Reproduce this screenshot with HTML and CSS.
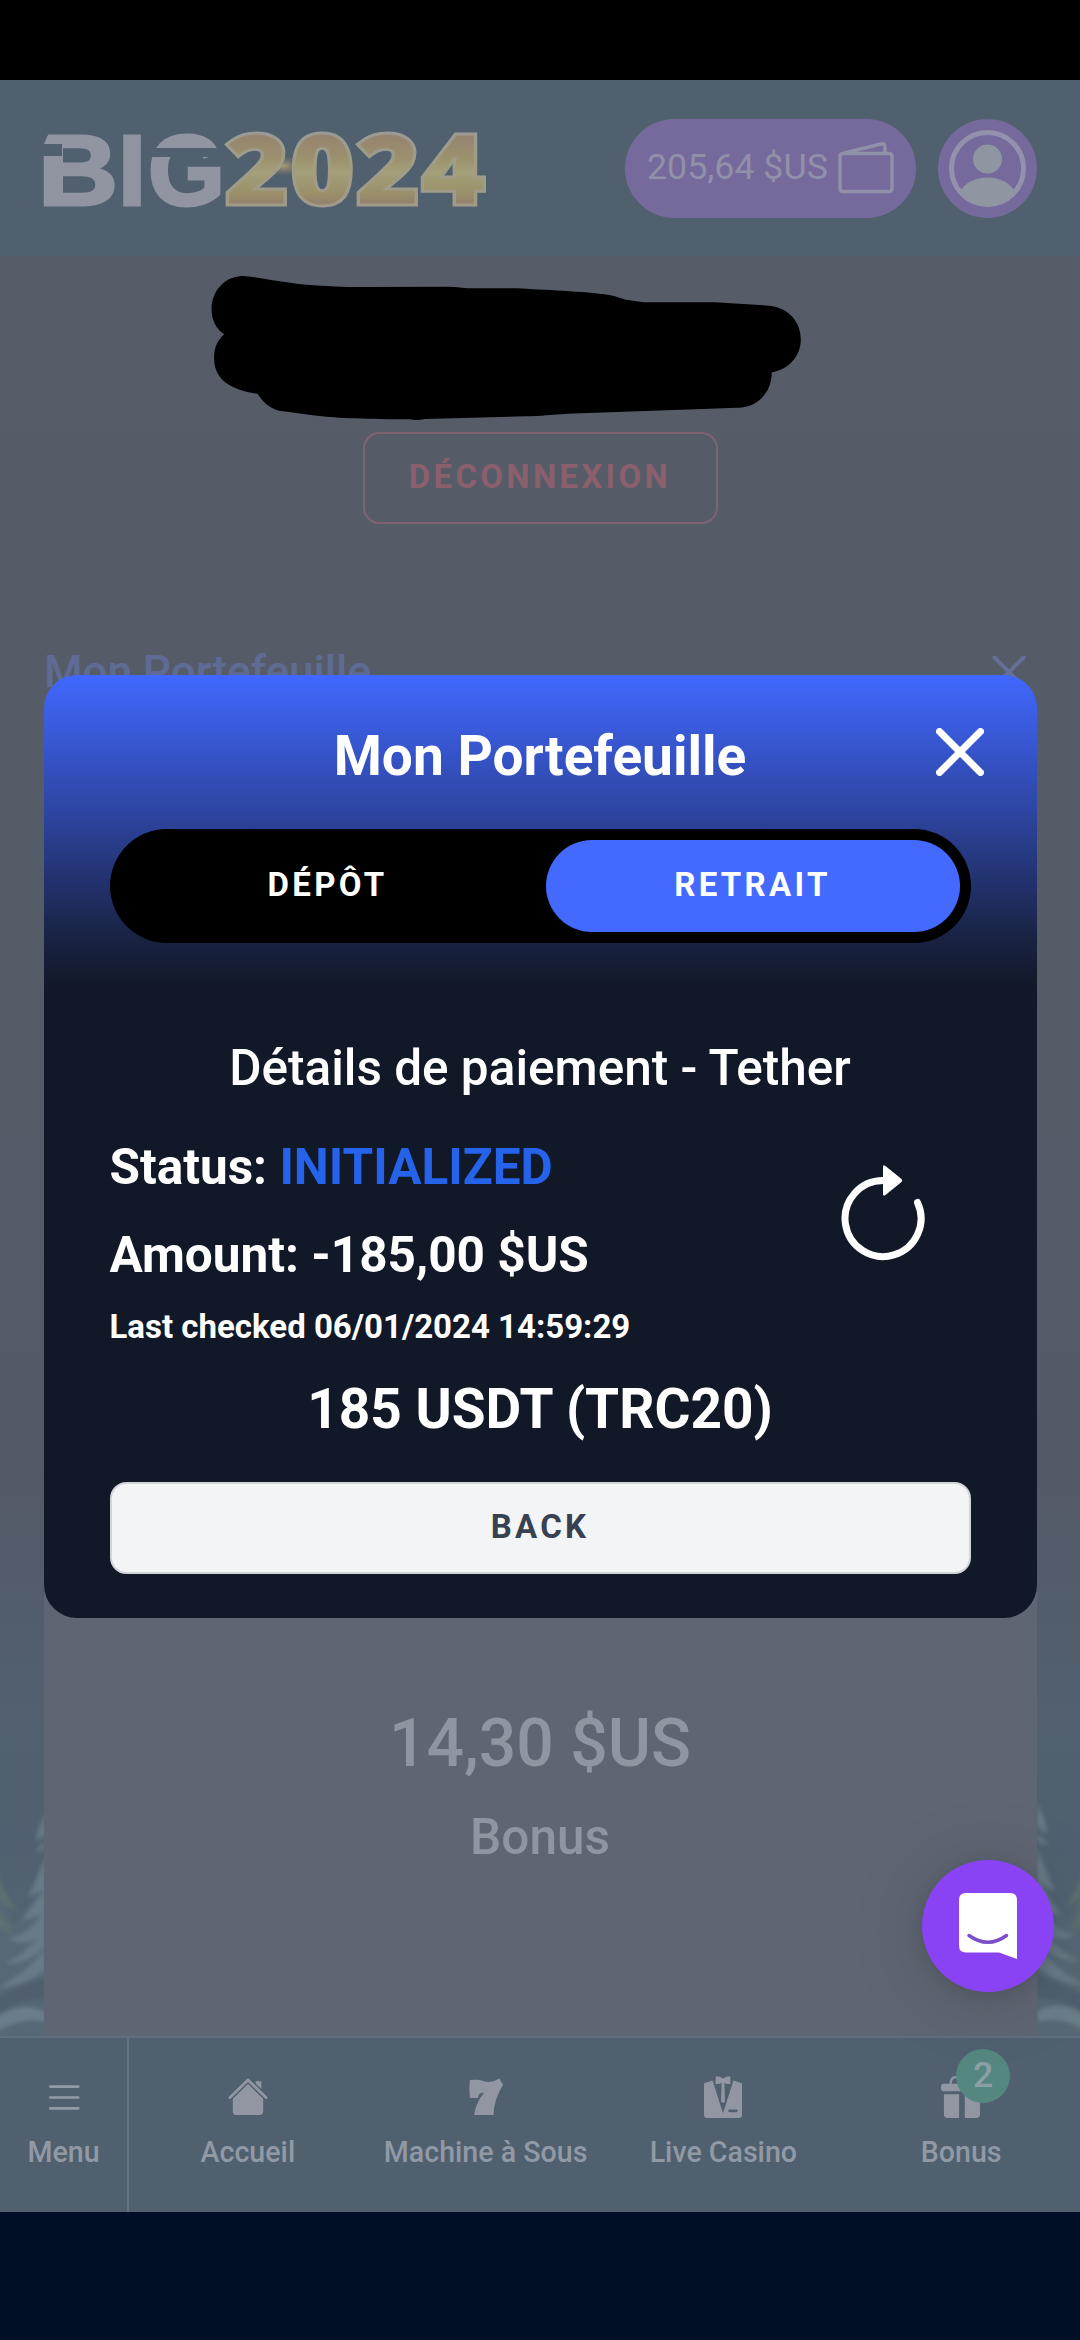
FILE: index.html
```html
<!DOCTYPE html>
<html lang="fr">
<head>
<meta charset="utf-8">
<title>BIG2024 - Mon Portefeuille</title>
<link rel="stylesheet" href="styles.css">
</head>
<body>
<div class="status-bar"></div>
<div class="app">
  <svg class="scenery" viewBox="0 0 1080 400" aria-hidden="true">
    <defs>
      <filter id="soft" x="-20%" y="-20%" width="140%" height="140%"><feGaussianBlur stdDeviation="2"/></filter>
      <g id="tree" filter="url(#soft)">
        <path d="M-6 240 L14 290 L46 250 V400 H-6Z" fill="#566774"/>
        <path d="M46 176 L38 194 L36 206 L46 198ZM46 205 L34 216 L44 214ZM46 220 L28 262 L46 252ZM46 250 L22 284 L46 278ZM46 272 Q30 300 8 302 Q28 314 46 294ZM46 290 Q30 316 4 328 Q28 328 46 310ZM46 312 Q26 338 -4 352 Q24 350 46 334Z" fill="#687a86"/>
        <path d="M-6 230 Q6 262 18 276 Q4 270 -6 256ZM-6 266 Q4 284 14 298 Q2 296 -6 286Z" fill="#5e706f"/>
        <path d="M-6 364 Q20 348 46 342 V362 Q20 364 -6 380Z" fill="#4f5f6e"/>
        <path d="M-4 382 Q20 364 46 376 V386 Q20 380 -4 396Z" fill="#6b7e89"/>
      </g>
    </defs>
    <use href="#tree"/>
    <use href="#tree" transform="translate(1083 -16) scale(-1 1.04)"/>
  </svg>

  <header class="topbar">
    <svg class="logo" viewBox="0 0 444 88" role="img" aria-label="BIG2024">
      <defs>
        <linearGradient id="gold" x1="0" y1="0" x2="0" y2="1">
          <stop offset="0" stop-color="#918686"/><stop offset=".3" stop-color="#97856f"/>
          <stop offset=".45" stop-color="#9c916d"/><stop offset=".55" stop-color="#a3a07a"/>
          <stop offset=".7" stop-color="#9a9069"/><stop offset=".8" stop-color="#927e6d"/>
          <stop offset="1" stop-color="#8d7773"/>
        </linearGradient>
        <linearGradient id="rim" x1="0" y1="0" x2="0" y2="1">
          <stop offset="0" stop-color="#9398a3"/><stop offset=".5" stop-color="#a09d86"/><stop offset="1" stop-color="#a0988e"/>
        </linearGradient>
        <radialGradient id="flare"><stop offset="0" stop-color="#a99a72"/><stop offset="1" stop-color="#8c7a70" stop-opacity="0"/></radialGradient>
      </defs>
      <text class="logo-big" y="80.500"><tspan x="-6" textLength="80" lengthAdjust="spacingAndGlyphs">B</tspan><tspan x="74">I</tspan><tspan x="104" textLength="77" lengthAdjust="spacingAndGlyphs">G</tspan></text>
      <path class="logo-cut" d="M-4 20H18V32H-4ZM-4 4H7L0 20H-4ZM104 24H180V33H104Z"/>
      <ellipse cx="240" cy="42" rx="18" ry="10" fill="url(#flare)"/>
      <text class="logo-year" x="180" y="80.500" textLength="262" lengthAdjust="spacingAndGlyphs">2024</text>
    </svg>
    <div class="account">
      <div class="balance">
        <span>205,64 $US</span>
        <svg class="wallet" viewBox="0 0 56 52"><path d="M6 11 L43 2 Q47 1 47 5 V11 M4 11.500 H51 Q54 11.500 54 14.500 V46 Q54 49.500 51 49.500 H5 Q2 49.500 2 46 V14.500 Q2 11.500 5 11.500Z" fill="none" stroke="#9090a9" stroke-width="3.500" stroke-linejoin="round"/></svg>
      </div>
      <svg class="avatar" viewBox="0 0 99 99">
        <circle cx="49.500" cy="49.500" r="49.500" fill="#756a9b"/>
        <circle cx="49.500" cy="49.500" r="36" fill="none" stroke="#9391ad" stroke-width="5"/>
        <circle cx="49.500" cy="40" r="14.500" fill="#8f96a1"/>
        <path d="M22.500 72 Q30 59 49.500 58.500 Q69 59 76.500 72 Q67 87 49.500 87.500 Q32 87 22.500 72Z" fill="#8f96a1"/>
      </svg>
    </div>
  </header>

  <main class="page">
    <svg class="redaction" viewBox="0 0 1080 176" aria-hidden="true">
      <path transform="translate(180 -6) scale(.4209 .3333)" d="M150 78 C180 80 240 96 300 104 C350 108 380 111 440 111 L640 110 C660 111 670 114 690 115 L800 115 C860 120 960 124 1020 135 C1045 140 1050 148 1065 150 L1100 157 L1270 157 L1400 167 C1445 172 1475 215 1475 268 C1475 320 1445 360 1406 367 C1406 430 1370 474 1325 473 L920 491 C880 494 860 498 820 499 L580 507 C570 511 555 511 545 508 C450 508 370 504 330 498 C300 494 270 486 235 482 C212 474 196 455 185 432 C150 424 81 410 81 325 C81 290 91 268 105 253 C86 238 75 210 75 177 C75 120 110 77 150 78Z"/>
    </svg>
    <button class="logout">DÉCONNEXION</button>
    <div class="page-title">
      <h2>Mon Portefeuille</h2>
      <svg class="page-close" viewBox="0 0 34 34"><path d="M2.500 2.500 L31.500 31.500 M31.500 2.500 L2.500 31.500"/></svg>
    </div>
    <section class="wallet-card">
      <div class="bonus-amount">14,30 $US</div>
      <div class="bonus-label">Bonus</div>
    </section>
  </main>

  <nav class="tabs">
    <a class="tab tab-menu">
      <svg viewBox="0 0 48 48"><path d="M9.500 12H39M9.500 23.500H39M9.500 35H39" fill="none" stroke="#919aa5" stroke-width="2.800" stroke-linecap="round"/></svg>
      <span>Menu</span>
    </a>
    <a class="tab">
      <svg viewBox="0 0 48 48"><path d="M24 8.500 L40 24.500 V38 Q40 42 36 42 H12 Q8 42 8 38 V24.500Z"/><path d="M32 14V6.500H38V20Z"/><path d="M5 23.500 L24 5 L43 23.500" fill="none" stroke="#50606f" stroke-width="6"/><path d="M5 23.500 L24 5 L43 23.500" fill="none" stroke="#9196a2" stroke-width="3" stroke-linecap="round" stroke-linejoin="round"/></svg>
      <span>Accueil</span>
    </a>
    <a class="tab">
      <svg viewBox="0 0 48 48"><path d="M7 5 Q17 4 21 6 Q30 9 38 3.500 L42 10 Q32 26 32 42 H11.500 Q13 29 22 18.500 Q16 18 15.500 24 H7 Q6 14 7 5Z"/></svg>
      <span>Machine à Sous</span>
    </a>
    <a class="tab">
      <svg viewBox="0 0 48 48"><path d="M13 5.500 L24 40 L35 5.500 L44 8.500 V42 Q44 45 41 45 H7 Q4 45 4 42 V8.500Z"/><path d="M16.500 1 Q21 1 24 3.500 Q27 1 31.500 1 L32 9 Q28 10 25.500 8 L26 28 Q24 30 22 28 L22.500 8 Q20 10 16 9Z"/><path d="M31 37.500H38" fill="none" stroke="#50606f" stroke-width="3" stroke-linecap="round"/></svg>
      <span>Live Casino</span>
    </a>
    <a class="tab">
      <span class="gift">
        <svg viewBox="0 0 48 48"><rect x="3" y="9" width="42" height="8" rx="3"/><path d="M6 20H22V45H10Q6 45 6 41ZM28 20H44V41Q44 45 40 45H28Z"/><path d="M13 10 Q13 2 18.500 2 Q23 2 24.500 9 Q27 2 31 2 Q36 2 36 10" fill="none" stroke="#9196a2" stroke-width="2.500"/></svg>
        <b class="badge">2</b>
      </span>
      <span>Bonus</span>
    </a>
  </nav>

  <div class="overlay">
    <section class="modal" role="dialog">
      <div class="modal-head">
        <h1>Mon Portefeuille</h1>
        <svg class="modal-close" viewBox="0 0 48 48"><path d="M3.500 3.500 L44.500 44.500 M44.500 3.500 L3.500 44.500"/></svg>
      </div>
      <div class="switch">
        <button>DÉPÔT</button>
        <button class="active">RETRAIT</button>
      </div>
      <h3>Détails de paiement - Tether</h3>
      <div class="info">
        <div>
          <p>Status: <span class="state">INITIALIZED</span></p>
          <p>Amount: -185,00 $US</p>
          <p class="checked">Last checked 06/01/2024 14:59:29</p>
        </div>
        <svg class="refresh" viewBox="0 0 88 100"><path d="M78.500 40.500 A38 38 0 1 1 44 18.500" fill="none" stroke="#fff" stroke-width="7" stroke-linecap="round"/><path d="M44 5 Q44 2 46.500 4 L62.500 17 Q64 18.500 62.500 20 L46.500 33 Q44 34.500 44 32Z" fill="#fff"/></svg>
      </div>
      <div class="total">185 USDT (TRC20)</div>
      <button class="back">BACK</button>
    </section>
  </div>

  <button class="chat" aria-label="Chat">
    <svg viewBox="0 0 58 66"><path d="M7 0H51Q58 0 58 7V66L40 59.500H7Q0 59.500 0 52.500V7Q0 0 7 0Z" fill="#fff"/><path d="M10 42.500Q29 56 47.500 42.500" fill="none" stroke="#7a4fc8" stroke-width="3.500" stroke-linecap="round"/></svg>
  </button>
</div>
<div class="system-bar"></div>
</body>
</html>
```
FILE: styles.css
```css
* { box-sizing: border-box; }
body { margin: 0; width: 1080px; height: 2340px; display: flex; flex-direction: column; overflow: hidden; font-family: Roboto, "Noto Sans", sans-serif; background: #000f25; }
h1, h2, h3, p { margin: 0; }
button { border: 0; padding: 0; font: inherit; }
svg { display: block; }
.status-bar { height: 80px; background: #000; }
.system-bar { height: 128px; background: #000f25; }
.app { position: relative; height: 2132px; display: flex; flex-direction: column; background: linear-gradient(#565c68 176px, #545c68 900px, #535a67 1400px, #52606f 1640px, #506070 1760px, #566673 1950px); }
.scenery { position: absolute; left: 0; top: 1556px; width: 1080px; height: 400px; }

.topbar { position: relative; height: 176px; padding: 0 43px 0 44px; display: flex; justify-content: space-between; align-items: center; background: #50606f; }
.logo { width: 444px; height: 88px; overflow: visible; }
.logo-big { font: 700 101px "Liberation Sans", sans-serif; fill: #9095a1; stroke: #9095a1; stroke-width: 3; }
.logo-cut { fill: #50606f; }
.logo-year { font: 800 100px "Open Sans", sans-serif; fill: url(#gold); stroke: url(#rim); stroke-width: 3; }
.account { display: flex; gap: 22px; }
.balance { width: 291px; height: 99px; border-radius: 50px; padding: 0 22px; display: flex; align-items: center; justify-content: space-between; background: #756a9b; color: #9090a9; font-size: 35.75px; line-height: 96px; white-space: nowrap; }
.balance span { padding-bottom: 2px; }
.wallet { width: 56px; height: 52px; }
.avatar { width: 99px; height: 99px; }

.page { position: relative; flex: 1; display: flex; flex-direction: column; align-items: center; }
.redaction { width: 1080px; height: 176px; }
.logout { width: 355px; height: 92px; border: 2.75px solid #806372; border-radius: 16.5px; background: none; color: #8c5f6c; font-size: 33px; font-weight: 700; letter-spacing: 3.3px; padding-bottom: 3px; }
.page-title { width: 992px; height: 66px; margin-top: 115px; display: flex; justify-content: space-between; align-items: center; color: #606b95; }
.page-title h2 { font-size: 44px; font-weight: 500; line-height: 66px; }
.page-close { width: 34px; height: 34px; margin-right: 10px; fill: none; stroke: #666f98; stroke-width: 4; stroke-linecap: round; }
.wallet-card { width: 993px; flex: 1; margin-top: 33px; padding-bottom: 166px; display: flex; flex-direction: column; justify-content: flex-end; align-items: center; background: #5f6673; color: #8f96a2; font-weight: 500; }
.bonus-amount { font-size: 66px; line-height: 88px; margin-bottom: 16px; }
.bonus-label { font-size: 49.5px; line-height: 66px; }

.tabs { position: relative; height: 176px; border-top: 2px solid #616f7e; display: grid; grid-template-columns: 129px repeat(4, 1fr); background: #50606f; color: #9199a5; fill: #9196a2; }
.tab { display: flex; flex-direction: column; align-items: center; padding-top: 36px; font-size: 28.6px; font-weight: 500; line-height: 44px; white-space: nowrap; }
.tab-menu { border-right: 2px solid #667482; }
.tab svg { width: 48px; height: 48px; margin-bottom: 8px; transform: scale(.95); }
.gift { position: relative; }
.badge { position: absolute; left: 19px; top: -25px; width: 54px; height: 54px; border-radius: 50%; background: #53877f; color: #8ba0a5; font-size: 35.75px; font-weight: 500; line-height: 53px; text-align: center; }

.overlay { position: absolute; inset: 0; display: flex; justify-content: center; align-items: center; }
.modal { width: 993px; height: 943px; padding: 0 66px 44px; border-radius: 33px; background: linear-gradient(#4168ff 0, #2d449f 140px, #192242 265px, #111827 315px); color: #fff; display: flex; flex-direction: column; }
.modal-head { height: 154px; display: grid; grid-template-columns: 1fr auto 1fr; padding-top: 43px; }
.modal-head h1 { grid-column: 2; font-size: 55px; font-weight: 700; line-height: 77px; }
.modal-close { width: 48px; height: 48px; justify-self: end; margin: 10px -13px 0 0; fill: none; stroke: #fff; stroke-width: 7; stroke-linecap: round; }
.switch { height: 114px; border-radius: 57px; padding: 11px; display: grid; grid-template-columns: 1fr 1fr; gap: 11px; background: #000; }
.switch button { border-radius: 46px; background: none; color: #fff; font-size: 33px; font-weight: 700; letter-spacing: 3.3px; padding-bottom: 3px; }
.switch .active { background: #4469ff; }
.modal h3 { margin-top: 87px; font-size: 49.5px; font-weight: 500; line-height: 77px; text-align: center; }
.info { margin-top: 16px; display: flex; justify-content: space-between; font-weight: 700; }
.info p { font-size: 49.5px; line-height: 88px; }
.info .checked { font-size: 33px; line-height: 55px; }
.state { color: #2563eb; }
.refresh { width: 88px; height: 100px; margin: 39px 44px 0 0; }
.total { margin-top: 17px; font-size: 55px; font-weight: 700; line-height: 77px; text-align: center; }
.back { margin-top: 34px; height: 92px; border: 2.75px solid #d1d5db; border-radius: 16.5px; background: #f3f4f6; color: #374151; font-size: 33px; font-weight: 700; letter-spacing: 3.3px; padding-bottom: 3px; }

.chat { position: absolute; left: 922px; top: 1780px; width: 132px; height: 132px; border-radius: 50%; background: #8943f5; box-shadow: 0 3px 16px rgba(0,0,0,.12), 0 6px 80px rgba(0,0,0,.14); display: flex; align-items: center; justify-content: center; }
.chat svg { width: 58px; height: 66px; }
```
